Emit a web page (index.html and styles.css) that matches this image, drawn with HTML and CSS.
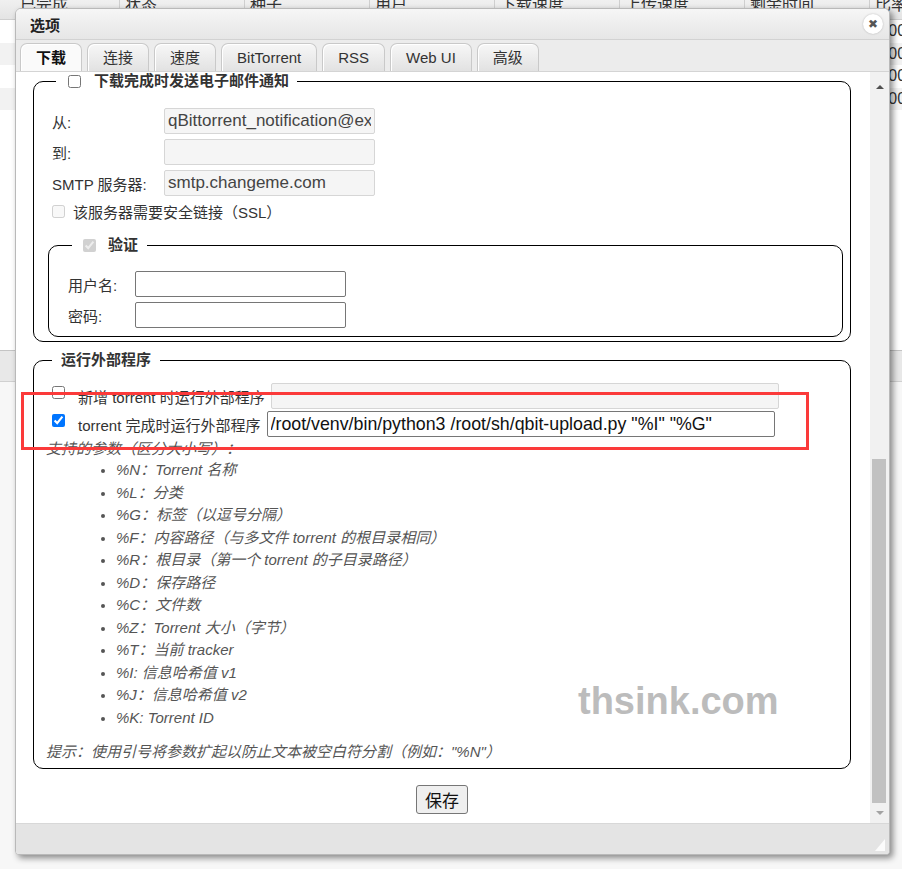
FILE: index.html
```html
<!DOCTYPE html>
<html lang="zh-CN">
<head>
    <meta charset="UTF-8">
    <meta name="viewport" content="width=device-width, initial-scale=1.0">
    <title>选项</title>
    <link rel="stylesheet" href="styles.css">
</head>
<body>
    <div class="backdrop">
        <div class="list-head">
            <span>已完成</span><span>状态</span><span>种子</span><span>用户</span>
            <span>下载速度</span><span>上传速度</span><span>剩余时间</span><span>比率</span>
        </div>
        <div class="list-row"><span></span><span></span><span></span><span></span><span></span><span></span><span></span><span>0.00</span></div>
        <div class="list-row alt"><span></span><span></span><span></span><span></span><span></span><span></span><span></span><span>0.00</span></div>
        <div class="list-row"><span></span><span></span><span></span><span></span><span></span><span></span><span></span><span>0.00</span></div>
        <div class="list-row alt"><span></span><span></span><span></span><span></span><span></span><span></span><span></span><span>0.00</span></div>
        <div class="list-body"></div>
        <div class="panel-tabs"></div>
        <div class="panel-body"></div>
    </div>

    <div class="dialog">
        <div class="dialog-title">
            <span>选项</span>
            <span class="close">&#x2716;</span>
        </div>
        <div class="tabs">
            <span class="tab active">下载</span>
            <span class="tab">连接</span>
            <span class="tab">速度</span>
            <span class="tab">BitTorrent</span>
            <span class="tab">RSS</span>
            <span class="tab">Web UI</span>
            <span class="tab">高级</span>
        </div>
        <div class="dialog-content">
            <div class="pane">
                <fieldset class="fs-mail">
                    <legend class="lg-mail"><input type="checkbox"><span>下载完成时发送电子邮件通知</span></legend>
                    <div class="mail-grid">
                        <label>从:</label>
                        <input type="text" class="field" value="qBittorrent_notification@example.com" disabled>
                        <label>到:</label>
                        <input type="text" class="field" disabled>
                        <label>SMTP 服务器:</label>
                        <input type="text" class="field" value="smtp.changeme.com" disabled>
                    </div>
                    <div class="check-row">
                        <input type="checkbox" disabled>
                        <span>该服务器需要安全链接（SSL）</span>
                    </div>
                    <fieldset class="fs-auth">
                        <legend class="lg-auth"><input type="checkbox" checked disabled><span>验证</span></legend>
                        <div class="auth-grid">
                            <label>用户名:</label>
                            <input type="text" class="field">
                            <label>密码:</label>
                            <input type="password" class="field">
                        </div>
                    </fieldset>
                </fieldset>

                <fieldset class="fs-run">
                    <legend class="lg-run">运行外部程序</legend>
                    <div class="run-row">
                        <input type="checkbox">
                        <span>新增 torrent 时运行外部程序</span>
                        <input type="text" class="field wide" disabled>
                    </div>
                    <div class="run-row">
                        <input type="checkbox" checked>
                        <span>torrent 完成时运行外部程序</span>
                        <input type="text" class="field wide" value='/root/venv/bin/python3 /root/sh/qbit-upload.py "%I" "%G"'>
                    </div>
                    <div class="params-title">支持的参数（区分大小写）：</div>
                    <ul class="params">
                        <li>%N：Torrent 名称</li>
                        <li>%L：分类</li>
                        <li>%G：标签（以逗号分隔）</li>
                        <li>%F：内容路径（与多文件 torrent 的根目录相同）</li>
                        <li>%R：根目录（第一个 torrent 的子目录路径）</li>
                        <li>%D：保存路径</li>
                        <li>%C：文件数</li>
                        <li>%Z：Torrent 大小（字节）</li>
                        <li>%T：当前 tracker</li>
                        <li>%I: 信息哈希值 v1</li>
                        <li>%J：信息哈希值 v2</li>
                        <li>%K: Torrent ID</li>
                    </ul>
                    <div class="hint">提示：使用引号将参数扩起以防止文本被空白符分割（例如："%N"）</div>
                </fieldset>

                <div class="actions">
                    <button type="button">保存</button>
                </div>
            </div>
            <div class="scrollbar">
                <span class="sb-up"><i></i></span>
                <span class="sb-track"><span class="sb-thumb"></span></span>
                <span class="sb-down"><i></i></span>
            </div>
        </div>
        <div class="dialog-foot"><span class="grip"></span></div>
    </div>

    <div class="highlight"></div>
    <div class="watermark">thsink.com</div>
</body>
</html>
```

FILE: styles.css
```css
body {
    margin: 0;
    width: 902px;
    height: 869px;
    overflow: hidden;
    background-color: #fafafa;
    font-family: "Liberation Sans", "Noto Sans CJK SC", sans-serif;
    font-size: 15px;
    color: #333;
}

/* page behind the dialog */
.backdrop {
    display: flex;
    flex-direction: column;
    height: 869px;
}

.list-head, .list-row {
    display: grid;
    grid-template-columns: 120px repeat(7, 125px);
}

.list-head {
    margin-top: -6px;
    height: 25px;
    line-height: 22px;
    background: linear-gradient(#f4f4f4, #e4e4e4);
    border-bottom: 1px solid #cfcfcf;
    font-size: 16px;
}

.list-head span {
    padding-left: 5px;
    border-right: 1px solid #cfcfcf;
    white-space: nowrap;
}

.list-head span:first-child {
    padding-left: 20px;
}

.list-row {
    height: 22.5px;
    line-height: 22px;
    background-color: #fff;
    font-size: 16px;
}

.list-row.alt {
    background-color: #f2f2f2;
}

.list-row span {
    padding-left: 5px;
    white-space: nowrap;
}

.list-body {
    height: 240px;
    background-color: #fff;
}

.panel-tabs {
    height: 30px;
    background-color: #e8e8e8;
    border-top: 1px solid #c4c4c4;
    border-bottom: 1px solid #d0d0d0;
}

.panel-body {
    flex: 1;
    background-color: #f7f7f7;
}

/* dialog window */
.dialog {
    position: absolute;
    top: 8px;
    left: 15px;
    width: 873px;
    height: 845px;
    display: flex;
    flex-direction: column;
    border: 1px solid #b9b9b9;
    border-radius: 6px 6px 4px 4px;
    background-color: #fff;
    box-shadow: 3px 3px 6px rgba(0, 0, 0, 0.45);
    overflow: hidden;
}

.dialog-title {
    height: 30px;
    display: flex;
    align-items: center;
    justify-content: space-between;
    padding: 0 6px 0 14px;
    background: linear-gradient(#f6f6f6, #e6e6e6);
    border-bottom: 1px solid #d2d2d2;
    font-weight: bold;
    color: #222;
}

.close {
    width: 20px;
    height: 20px;
    border-radius: 50%;
    background-color: #fff;
    box-shadow: 0 0 2px rgba(0, 0, 0, 0.25);
    display: flex;
    align-items: center;
    justify-content: center;
    font-size: 12px;
    color: #555;
    font-family: "DejaVu Sans", sans-serif;
}

.tabs {
    height: 32px;
    box-sizing: border-box;
    display: flex;
    align-items: flex-end;
    gap: 5px;
    padding: 0 4px;
    background-color: #ececec;
    border-bottom: 1px solid #d4d4d4;
}

.tab {
    height: 27px;
    line-height: 27px;
    padding: 0 15px;
    border: 1px solid #c9c9c9;
    border-bottom: none;
    border-radius: 7px 7px 0 0;
    background: linear-gradient(#f7f7f7, #e2e2e2);
    box-shadow: inset 1px 1px 0 #fff;
    color: #333;
}

.tab.active {
    background: #fafafa;
    font-weight: bold;
    color: #111;
}

.dialog-content {
    flex: 1;
    display: flex;
    min-height: 0;
}

.pane {
    flex: 1;
    overflow: hidden;
    padding: 0 19px 0 17px;
}

fieldset {
    margin: 0;
    border: 1px solid #000;
    border-radius: 10px;
    min-width: 0;
}

legend {
    line-height: 18px;
    font-weight: bold;
    color: #333;
}

legend input {
    vertical-align: -2px;
}

input[type="checkbox"] {
    width: 13px;
    height: 13px;
    margin: 0;
}

.fs-mail {
    padding: 18px 7px 4px 14px;
}

.lg-mail {
    margin-left: 8px;
    padding: 0 8px 0 12px;
}

.lg-mail input {
    margin-right: 13px;
}

.field {
    box-sizing: border-box;
    height: 26px;
    width: 211px;
    margin: 0;
    padding: 0 3px;
    border: 1px solid #767676;
    border-radius: 2px;
    background-color: #fff;
    font-family: "Liberation Sans", "Noto Sans CJK SC", sans-serif;
    font-size: 17px;
    color: #111;
}

.field:disabled {
    background-color: #f5f5f5;
    border-color: #d6d6d6;
    color: #444;
}

.mail-grid {
    display: grid;
    grid-template-columns: 112px 211px;
    row-gap: 5px;
    align-items: center;
    margin-left: 4px;
}

.check-row {
    display: flex;
    align-items: center;
    gap: 8px;
    height: 20px;
    margin: 5px 0 0 4px;
}

.fs-auth {
    margin-top: 14px;
    padding: 16px 8px 8px 19px;
}

.fs-auth legend {
    line-height: 20px;
}

.lg-auth {
    margin-left: 4px;
    padding: 0 9px 0 11px;
}

.lg-auth input {
    margin-right: 12px;
}

.auth-grid {
    display: grid;
    grid-template-columns: 67px 211px;
    row-gap: 5px;
    align-items: center;
}

.fs-run {
    margin-top: 8px;
    padding: 13px 7px 5px 12px;
}

.lg-run {
    line-height: 20px;
    margin-left: 6px;
    padding: 0 9px;
}

.run-row {
    display: flex;
    align-items: center;
    height: 26px;
    margin: 0 0 2px 6px;
    white-space: nowrap;
}

.run-row input[type="checkbox"] {
    margin: 0 13px 8px 0;
}

.field.wide {
    width: 508px;
    margin-left: 6px;
    font-size: 17.8px;
}

.params-title, .params, .hint {
    font-style: italic;
    color: #555;
}

.params-title {
    line-height: 20px;
}

.params {
    margin: 0;
    padding-left: 70px;
    line-height: 22.5px;
}

.params li::marker {
    font-size: 13px;
}

.hint {
    margin-top: 12px;
    line-height: 22px;
}

.actions {
    margin-top: 16px;
    text-align: center;
}

button {
    height: 29px;
    padding: 0 8px;
    border: 1px solid #767676;
    border-radius: 3px;
    background-color: #efefef;
    font-family: "Liberation Sans", "Noto Sans CJK SC", sans-serif;
    font-size: 17px;
    color: #111;
}

/* fake scroll bar */
.scrollbar {
    width: 19px;
    display: flex;
    flex-direction: column;
    background-color: #f1f1f1;
}

.sb-up, .sb-down {
    display: flex;
    justify-content: center;
    align-items: center;
}

.sb-up {
    height: 30px;
}

.sb-down {
    height: 20px;
}

.sb-up i, .sb-down i {
    width: 0;
    height: 0;
    border-left: 4px solid transparent;
    border-right: 4px solid transparent;
}

.sb-up i {
    border-bottom: 4px solid #505050;
}

.sb-down i {
    border-top: 4px solid #a3a3a3;
}

.sb-track {
    flex: 1;
    display: flex;
    flex-direction: column;
    justify-content: flex-end;
}

.sb-thumb {
    height: 344px;
    margin: 0 3px 0 2px;
    background-color: #c1c1c1;
}

.dialog-foot {
    height: 27px;
    display: flex;
    justify-content: flex-end;
    align-items: flex-end;
    padding: 0 4px 3px 0;
    background-color: #e4e4e4;
    border-top: 1px solid #d8d8d8;
}

.grip {
    width: 0;
    height: 0;
    border-left: 10px solid transparent;
    border-bottom: 12px solid #fbfbfb;
}

/* overlays on top of the screenshot */
.highlight {
    position: absolute;
    left: 21px;
    top: 392px;
    width: 788px;
    height: 58px;
    box-sizing: border-box;
    border: 3px solid #fb3a3a;
}

.watermark {
    position: absolute;
    left: 578px;
    top: 682px;
    font-size: 38px;
    line-height: 38px;
    font-weight: bold;
    color: #bcbcbc;
}
```
